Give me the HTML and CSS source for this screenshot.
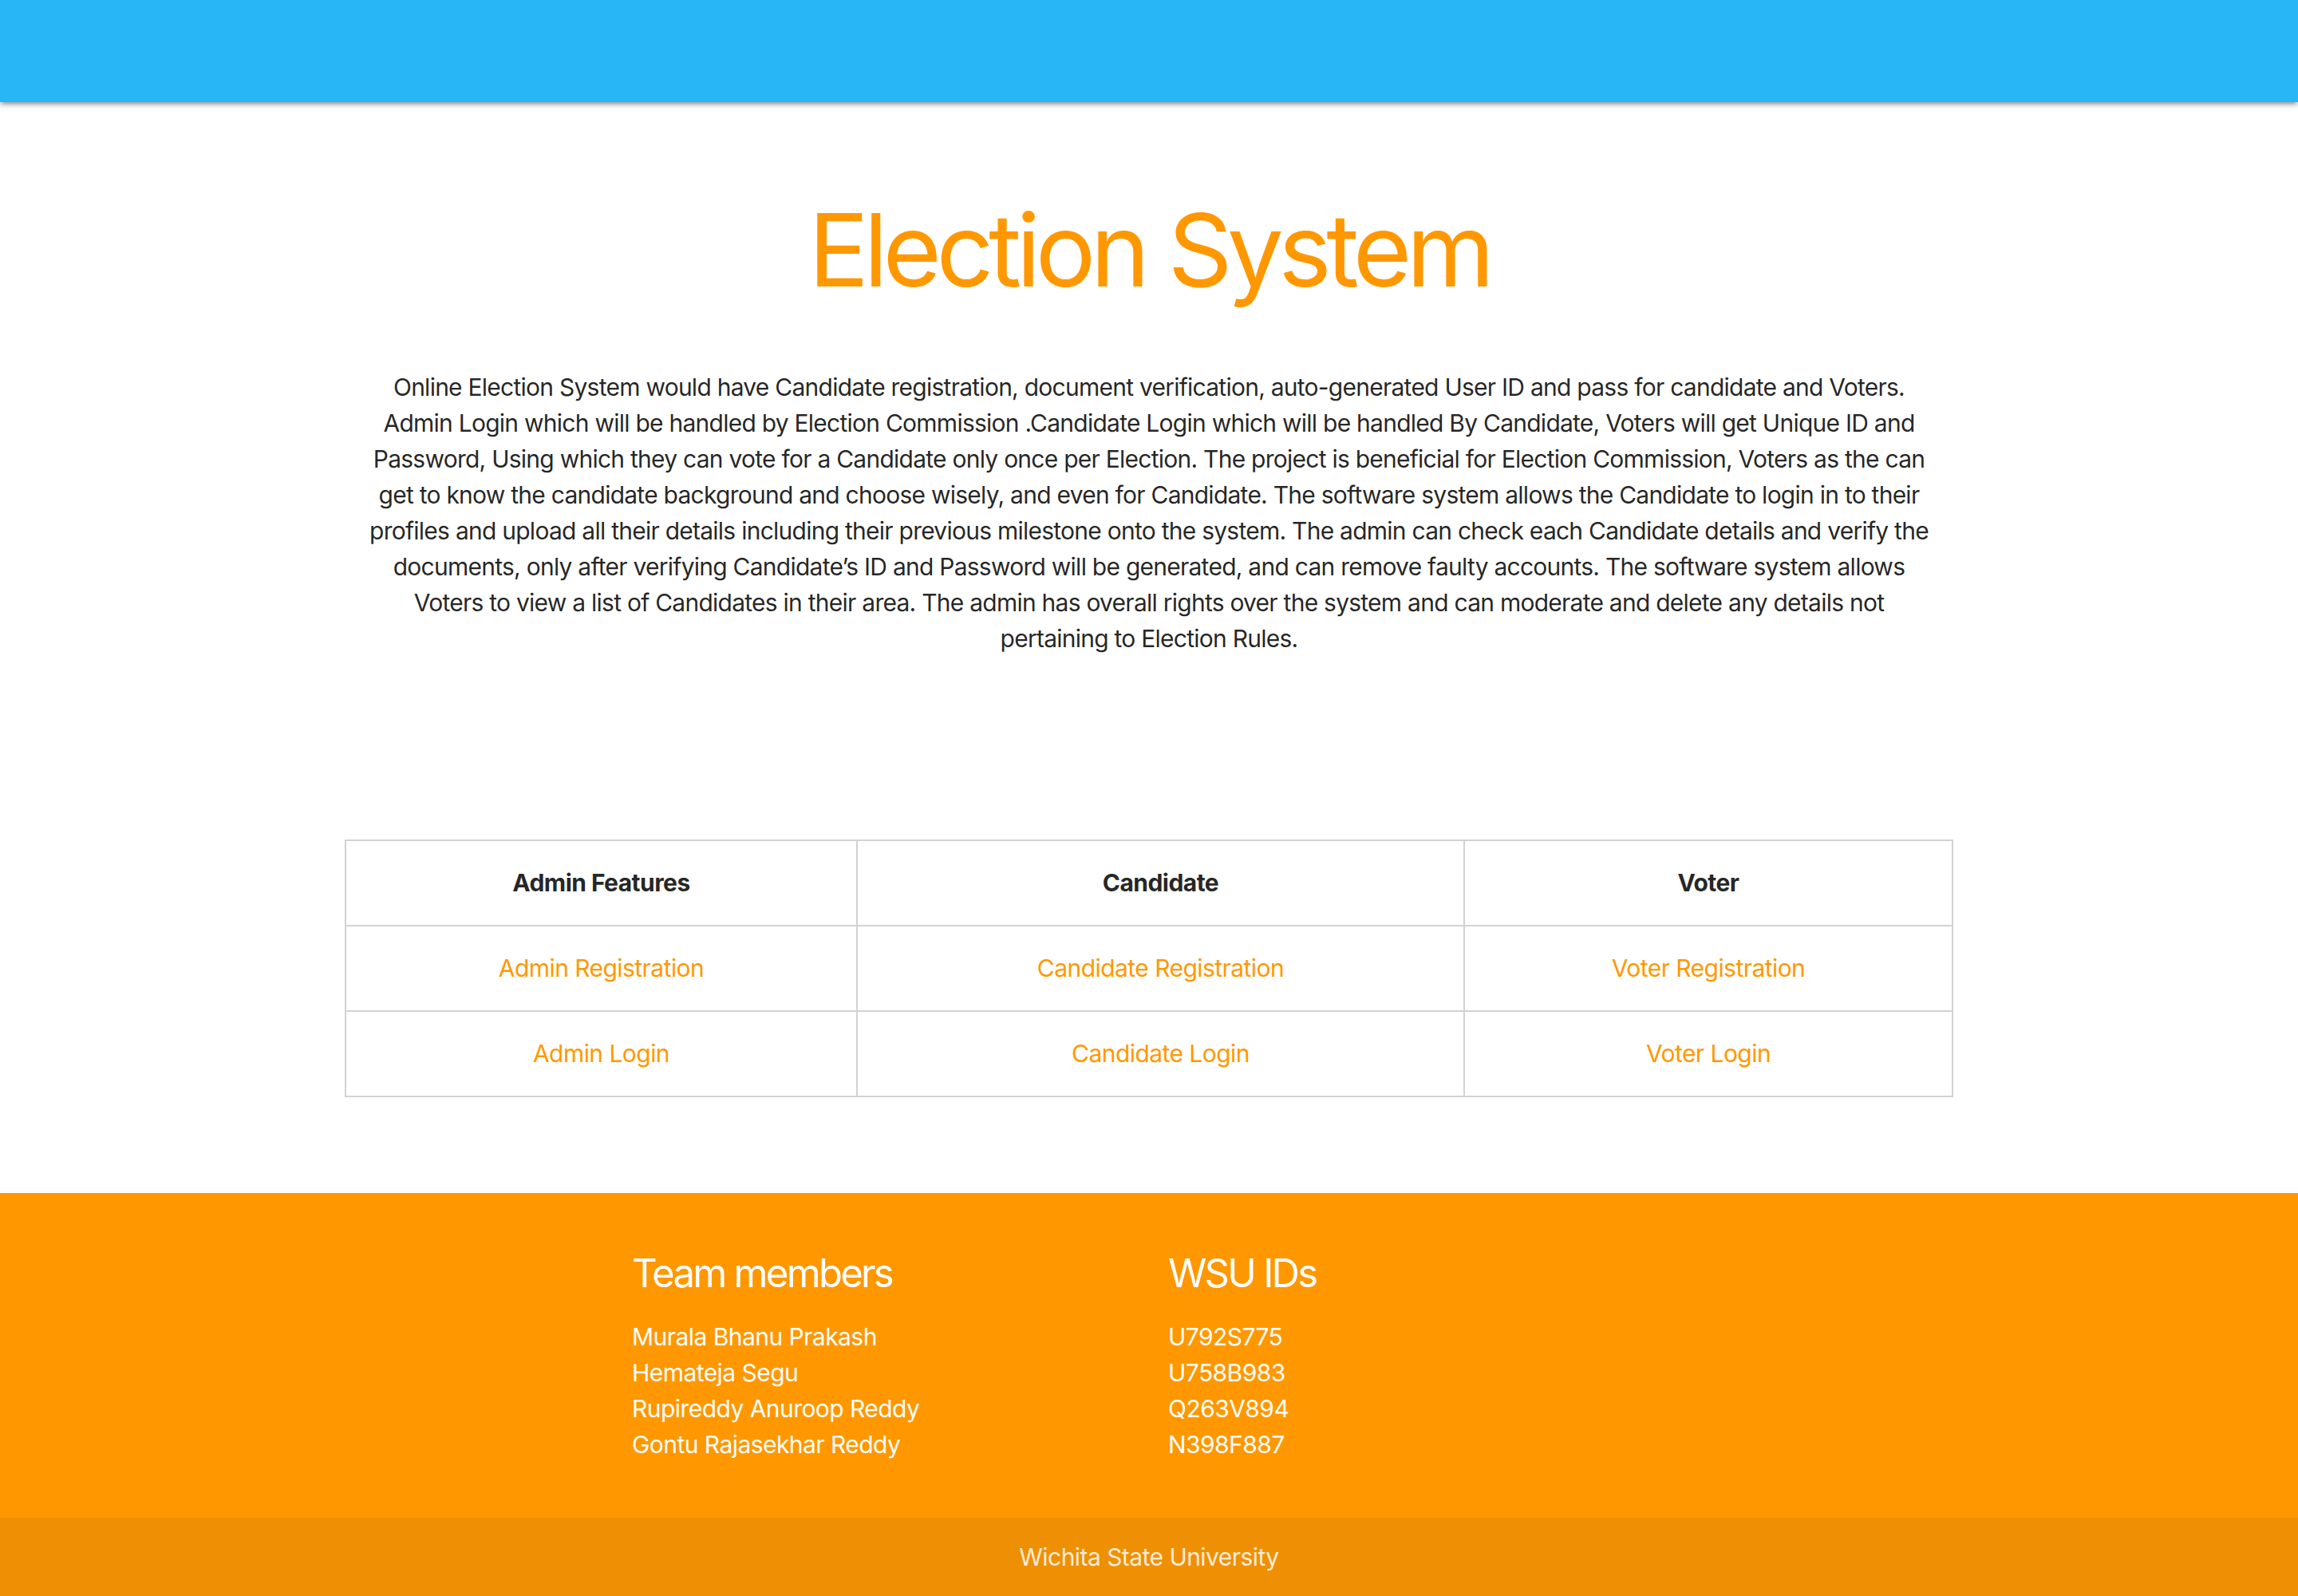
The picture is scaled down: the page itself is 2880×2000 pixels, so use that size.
FILE: index.html
```
<!DOCTYPE html>
<html lang="en">
<head>
<meta charset="utf-8">
<title>Election System</title>
<link rel="stylesheet" href="styles.css">
</head>
<body>
<nav class="topbar"></nav>
<main class="container">
  <h1 class="title">Election System</h1>
  <p class="intro">Online Election System would have Candidate registration, document verification, auto-generated User ID and pass for candidate and Voters.<br>Admin Login which will be handled by Election Commission .Candidate Login which will be handled By Candidate, Voters will get Unique ID and<br>Password, Using which they can vote for a Candidate only once per Election. The project is beneficial for Election Commission, Voters as the can<br>get to know the candidate background and choose wisely, and even for Candidate. The software system allows the Candidate to login in to their<br>profiles and upload all their details including their previous milestone onto the system. The admin can check each Candidate details and verify the<br>documents, only after verifying Candidate’s ID and Password will be generated, and can remove faulty accounts. The software system allows<br>Voters to view a list of Candidates in their area. The admin has overall rights over the system and can moderate and delete any details not<br>pertaining to Election Rules.</p>
  <table class="features">
    <colgroup>
      <col class="c1"><col class="c2"><col class="c3">
    </colgroup>
    <thead>
      <tr><th>Admin Features</th><th>Candidate</th><th>Voter</th></tr>
    </thead>
    <tbody>
      <tr><td><a href="#">Admin Registration</a></td><td><a href="#">Candidate Registration</a></td><td><a href="#">Voter Registration</a></td></tr>
      <tr><td><a href="#">Admin Login</a></td><td><a href="#">Candidate Login</a></td><td><a href="#">Voter Login</a></td></tr>
    </tbody>
  </table>
</main>
<footer class="page-footer">
  <div class="footer-inner">
    <div class="fcol">
      <h5 class="fhead">Team members</h5>
      <ul class="flist">
        <li>Murala Bhanu Prakash</li>
        <li>Hemateja Segu</li>
        <li>Rupireddy Anuroop Reddy</li>
        <li>Gontu Rajasekhar Reddy</li>
      </ul>
    </div>
    <div class="fcol">
      <h5 class="fhead">WSU IDs</h5>
      <ul class="flist">
        <li>U792S775</li>
        <li>U758B983</li>
        <li>Q263V894</li>
        <li>N398F887</li>
      </ul>
    </div>
  </div>
  <div class="copyright">Wichita State University</div>
</footer>
</body>
</html>
```
FILE: styles.css
```
html, body {
  margin: 0;
  padding: 0;
}
body {
  font-family: Inter, Roboto, "Liberation Sans", sans-serif;
  font-size: 30px;
  line-height: 45px;
  letter-spacing: -0.55px;
  color: rgba(0, 0, 0, 0.87);
  background: #fff;
}
.topbar {
  display: block;
  height: 128px;
  background: #29b6f6;
  box-shadow: 0 4px 4px 0 rgba(0,0,0,0.14), 0 6px 2px -4px rgba(0,0,0,0.12), 0 2px 10px 0 rgba(0,0,0,0.2);
}
.container {
  width: 2016px;
  margin: 0 auto;
}
.title {
  margin: 116px 0 0;
  font-size: 126px;
  line-height: 1.1;
  font-weight: 400;
  letter-spacing: -6.5px;
  color: #ff9800;
  text-align: center;
}
.intro {
  margin: 80px 0 0;
  padding: 0 24px;
  text-align: center;
  font-size: 30px;
  line-height: 45px;
  letter-spacing: -0.75px;
  white-space: nowrap;
}
.features {
  margin-top: 229px;
  width: 100%;
  border-collapse: collapse;
  table-layout: fixed;
}
.c1 { width: 641px; }
.c2 { width: 761px; }
.c3 { width: 612px; }
.features th,
.features td {
  border: 2px solid #d2d2d2;
  padding: 30px 10px;
  text-align: center;
  font-size: 30px;
  line-height: 45px;
}
.features th {
  font-weight: 700;
  color: rgba(0,0,0,0.87);
}
.features a {
  color: #ff9800;
  text-decoration: none;
}
.page-footer {
  margin-top: 120px;
  background: #ff9800;
  color: #fff;
}
.footer-inner {
  width: 2016px;
  margin: 0 auto;
  padding: 74px 0 69px 336px;
  box-sizing: border-box;
  display: flex;
}
.fcol {
  width: 672px;
  padding: 0 24px;
  box-sizing: border-box;
}
.fhead {
  margin: 0;
  font-size: 49px;
  line-height: 54px;
  font-weight: 400;
  letter-spacing: -2.7px;
}
.flist {
  list-style: none;
  margin: 30px 0 0;
  padding: 0;
  font-size: 30px;
  line-height: 45px;
}
.copyright {
  height: 99px;
  line-height: 99px;
  text-align: center;
  background: #ef9004;
  color: rgba(255,255,255,0.85);
  font-size: 30px;
}
```
